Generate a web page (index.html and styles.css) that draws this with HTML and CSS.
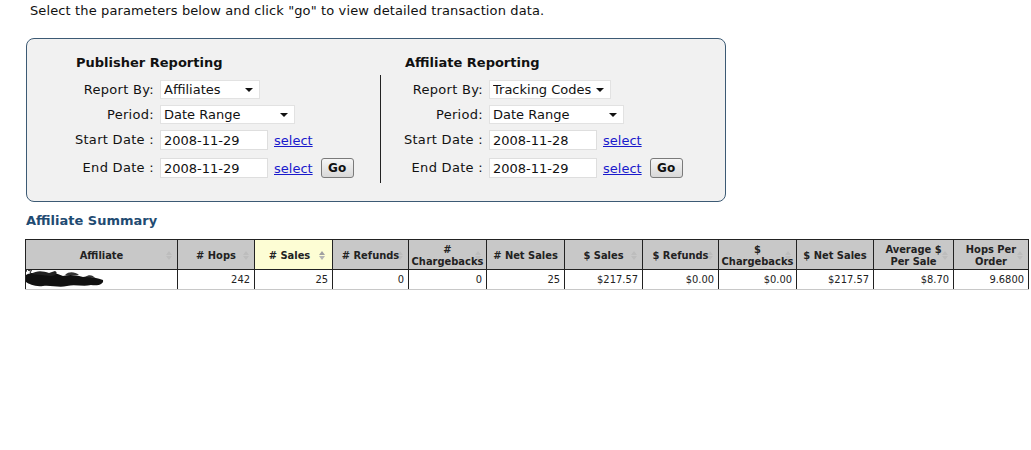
FILE: index.html
```html
<!DOCTYPE html>
<html lang="en">
<head>
  <meta charset="UTF-8" />
  <title>Transaction Reports</title>
  <link rel="stylesheet" href="styles.css">
</head>
<body>
  <p class="intro">Select the parameters below and click "go" to view detailed transaction data.</p>

  <div class="panel">
    <div class="report publisher">
      <h2>Publisher Reporting</h2>
      <div class="row">
        <label>Report By:</label>
        <span class="select-wrap w100"><select><option>Affiliates</option></select></span>
      </div>
      <div class="row">
        <label>Period:</label>
        <span class="select-wrap w135"><select><option>Date Range</option></select></span>
      </div>
      <div class="row">
        <label>Start Date :</label>
        <input type="text" value="2008-11-29" />
        <a href="#">select</a>
      </div>
      <div class="row last">
        <label>End Date :</label>
        <input type="text" value="2008-11-29" />
        <a href="#">select</a>
        <button>Go</button>
      </div>
    </div>

    <div class="divider"></div>

    <div class="report affiliate">
      <h2>Affiliate Reporting</h2>
      <div class="row">
        <label>Report By:</label>
        <span class="select-wrap w122"><select><option>Tracking Codes</option></select></span>
      </div>
      <div class="row">
        <label>Period:</label>
        <span class="select-wrap w135"><select><option>Date Range</option></select></span>
      </div>
      <div class="row">
        <label>Start Date :</label>
        <input type="text" value="2008-11-28" />
        <a href="#">select</a>
      </div>
      <div class="row last">
        <label>End Date :</label>
        <input type="text" value="2008-11-29" />
        <a href="#">select</a>
        <button>Go</button>
      </div>
    </div>
  </div>

  <h3 class="summary-title">Affiliate Summary</h3>

  <table class="summary">
    <colgroup>
      <col style="width:152px"><col style="width:77px"><col style="width:78px"><col style="width:76px">
      <col style="width:78px"><col style="width:78px"><col style="width:78px"><col style="width:76px">
      <col style="width:78px"><col style="width:77px"><col style="width:80px"><col style="width:75px">
    </colgroup>
    <thead>
      <tr>
        <th>Affiliate<span class="sort"></span></th>
        <th># Hops<span class="sort"></span></th>
        <th class="sorted"># Sales<span class="sort on"></span></th>
        <th># Refunds<span class="sort"></span></th>
        <th>#<br>Chargebacks<span class="sort"></span></th>
        <th># Net Sales<span class="sort"></span></th>
        <th>$ Sales<span class="sort"></span></th>
        <th>$ Refunds<span class="sort"></span></th>
        <th>$<br>Chargebacks<span class="sort"></span></th>
        <th>$ Net Sales<span class="sort"></span></th>
        <th>Average $<br>Per Sale<span class="sort"></span></th>
        <th>Hops Per<br>Order<span class="sort"></span></th>
      </tr>
    </thead>
    <tbody>
      <tr>
        <td class="name">
          <svg class="scribble" width="80" height="22" viewBox="0 0 80 22">
            <path d="M2 1 l2 3 l3 -2 l-2 4 l3 1 l-4 1 l1 3 l-3 -2 l-2 2 l0 -4 l-2 -1 l3 -1 z" fill="none" stroke="#222" stroke-width="1"/>
            <path d="M1 8 C6 5 14 6 20 8 C26 5 32 6 38 9 C44 7 52 8 58 10 C64 9 72 11 78 13 C79 17 74 19 66 18 C58 20 50 17 42 19 C34 21 26 18 18 19 C10 20 4 17 1 15 Z" fill="#111"/>
            <path d="M6 7 C12 3 18 4 24 6 L30 4 C34 6 30 9 26 9 Z" fill="#222"/>
            <path d="M40 8 C44 4 50 5 54 8 Z" fill="#333"/>
            <path d="M60 10 C64 7 68 8 70 11 Z" fill="#333"/>
          </svg>
        </td>
        <td>242</td>
        <td>25</td>
        <td>0</td>
        <td>0</td>
        <td>25</td>
        <td>$217.57</td>
        <td>$0.00</td>
        <td>$0.00</td>
        <td>$217.57</td>
        <td>$8.70</td>
        <td>9.6800</td>
      </tr>
    </tbody>
  </table>
</body>
</html>
```

FILE: styles.css
```css
* {
  box-sizing: border-box;
  margin: 0;
  padding: 0;
  font-family: 'DejaVu Sans', Verdana, sans-serif;
}
body {
  background: white;
  color: #111;
  font-size: 13px;
}
.intro {
  line-height: 16px;
  padding: 3px 0 0 30px;
  letter-spacing: 0.12px;
}
.panel {
  display: flex;
  width: 700px;
  margin: 19px 0 0 26px;
  padding: 16px 0 18px 0;
  background: #f1f1f1;
  border: 1px solid #3c5a74;
  border-radius: 8px;
}
.report h2 {
  font-size: 13px;
  font-weight: bold;
  line-height: 16px;
  margin: 0 0 9px 4px;
}
.publisher {
  width: 353px;
  padding-left: 45px;
}
.affiliate {
  padding-left: 20px;
}
.divider {
  width: 1px;
  height: 108px;
  margin-top: 20px;
  background: #222;
}
.row {
  display: flex;
  align-items: center;
  height: 19px;
  margin-bottom: 6px;
}
.row.last {
  height: 20px;
  margin-top: 8px;
  margin-bottom: 0;
}
.row:nth-child(4) {
  height: 20px;
}
.row label {
  width: 83px;
  text-align: right;
  padding-right: 1px;
  margin-right: 5px;
  line-height: 16px;
  letter-spacing: 0.3px;
}
.select-wrap {
  position: relative;
  display: inline-block;
  height: 19px;
}
.select-wrap select {
  appearance: none;
  -webkit-appearance: none;
  width: 100%;
  height: 19px;
  border: 1px solid #e2e2e2;
  background: white;
  font-size: 13px;
  padding: 0 0 0 3px;
  color: #111;
}
.select-wrap::after {
  content: "";
  position: absolute;
  right: 7px;
  top: 8px;
  border-left: 4px solid transparent;
  border-right: 4px solid transparent;
  border-top: 4px solid #111;
}
.w100 { width: 100px; }
.w122 { width: 122px; }
.w135 { width: 135px; }
.row input {
  width: 108px;
  height: 20px;
  border: 1px solid #dedede;
  background: white;
  font-size: 13px;
  padding: 0 0 0 3px;
  color: #111;
}
.row a {
  color: #1a1acc;
  text-decoration: underline;
  margin-left: 6px;
}
.row button {
  margin-left: 8px;
  width: 33px;
  height: 20px;
  border: 1px solid #7a7a7a;
  border-radius: 3px;
  background: linear-gradient(#f6f6f6, #d8d8d8);
  font-size: 12px;
  font-weight: bold;
  color: #111;
}
.summary-title {
  font-size: 13px;
  font-weight: bold;
  line-height: 16px;
  color: #1f4b72;
  margin: 11px 0 0 26px;
}
.summary {
  table-layout: fixed;
  width: 1004px;
  border-collapse: collapse;
  margin: 10px 0 0 25px;
}
.summary th,
.summary td {
  font-family: 'DejaVu Sans Condensed', 'DejaVu Sans', sans-serif;
  font-stretch: condensed;
  font-size: 11px;
}
.summary th {
  position: relative;
  z-index: 0;
  height: 30px;
  background: #c8c8c8;
  border: 1px solid #222;
  font-weight: bold;
  color: #222;
  line-height: 12px;
  padding: 2px 0 0 0;
  text-align: center;
  vertical-align: middle;
}
.summary th.sorted {
  background: #fdfdd4;
  padding-right: 8px;
}
.sort {
  position: absolute;
  right: 4px;
  top: 11px;
  width: 7px;
  height: 9px;
  z-index: -1;
}
.sort::before,
.sort::after {
  content: "";
  position: absolute;
  left: 0;
  border-left: 3.5px solid transparent;
  border-right: 3.5px solid transparent;
}
.sort::before {
  top: 0;
  border-bottom: 4px solid #bdbdbd;
}
.sort::after {
  top: 5px;
  border-top: 4px solid #bdbdbd;
}
.sorted .sort {
  right: 6px;
}
.sort.on::before {
  border-bottom-color: #a0a0a0;
}
.sort.on::after {
  border-top-color: #b4b4b4;
}
.summary td {
  height: 20px;
  border-left: 1px solid #222;
  border-right: 1px solid #222;
  border-bottom: 1px solid #c8c8c8;
  text-align: right;
  padding: 0 4px 0 2px;
  color: #222;
  white-space: nowrap;
}
.summary td.name {
  text-align: left;
  padding: 0;
  vertical-align: top;
}
.scribble {
  display: block;
  margin: -3px 0 0 -1px;
}
```
